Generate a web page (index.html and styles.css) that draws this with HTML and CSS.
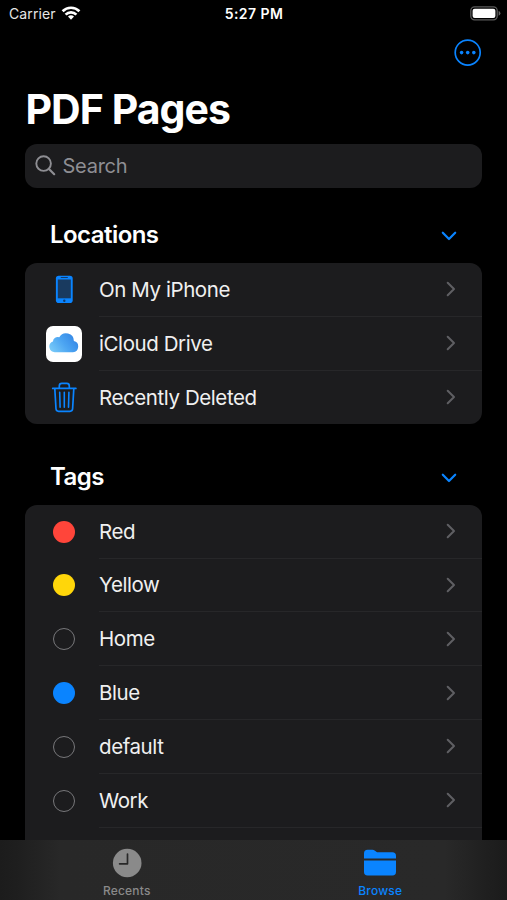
FILE: index.html
```html
<!DOCTYPE html>
<html lang="en">
<head>
    <meta charset="UTF-8">
    <meta name="viewport" content="width=device-width, initial-scale=1.0">
    <title>PDF Pages</title>
    <link rel="stylesheet" href="styles.css">
</head>
<body>
    <svg class="symbols" aria-hidden="true">
        <symbol id="chevron-right" viewBox="0 0 10 16">
            <path d="M1.7 1.7 L8 8 L1.7 14.3" fill="none" stroke="currentColor" stroke-width="2" stroke-linecap="round" stroke-linejoin="round"/>
        </symbol>
        <symbol id="chevron-down" viewBox="0 0 16 10">
            <path d="M1.8 1.7 L8 8 L14.2 1.7" fill="none" stroke="currentColor" stroke-width="2.2" stroke-linecap="round" stroke-linejoin="round"/>
        </symbol>
    </svg>
    <div class="phone">
        <div class="status-bar">
            <div class="carrier">
                <span>Carrier</span>
                <svg width="20" height="15" viewBox="0 0 20 15">
                    <g fill="none" stroke="#fff" stroke-width="2.7">
                        <path d="M1.6 5.2 A12 12 0 0 1 18.4 5.2"/>
                        <path d="M4.6 8.6 A7.6 7.6 0 0 1 15.4 8.6"/>
                    </g>
                    <path d="M7 10.6 A4.4 4.4 0 0 1 13 10.6 L10 13.7 Z" fill="#fff"/>
                </svg>
            </div>
            <div class="time">5:27 PM</div>
            <div class="battery">
                <svg width="32" height="15" viewBox="0 0 32 15">
                    <rect x="0.8" y="0.9" width="26.4" height="12.9" rx="3.8" fill="none" stroke="#5b5b5b" stroke-width="1.3"/>
                    <rect x="2.6" y="2.7" width="22.8" height="9.3" rx="2.1" fill="#fff"/>
                    <path d="M28.6 5 Q30.4 5.6 30.4 7.3 Q30.4 9 28.6 9.7 Z" fill="#666"/>
                </svg>
            </div>
        </div>
        <header class="nav">
            <button class="more-btn" aria-label="More">
                <svg width="28" height="28" viewBox="0 0 28 28">
                    <circle cx="13.7" cy="13.6" r="12.5" fill="none" stroke="currentColor" stroke-width="1.7"/>
                    <circle cx="7.6" cy="13.6" r="1.8" fill="currentColor"/>
                    <circle cx="13.7" cy="13.6" r="1.8" fill="currentColor"/>
                    <circle cx="19.8" cy="13.6" r="1.8" fill="currentColor"/>
                </svg>
            </button>
        </header>
        <main class="content">
            <h1>PDF Pages</h1>
            <div class="search">
                <svg width="22" height="22" viewBox="0 0 22 22">
                    <circle cx="8.6" cy="8.6" r="7.3" fill="none" stroke="currentColor" stroke-width="1.9"/>
                    <path d="M14 14 L19.2 19.2" stroke="currentColor" stroke-width="2.2" stroke-linecap="round"/>
                </svg>
                <span>Search</span>
            </div>

            <section>
                <div class="section-header">
                    <h2>Locations</h2>
                    <svg class="toggle"><use href="#chevron-down"/></svg>
                </div>
                <ul class="list">
                    <li>
                        <div class="icon">
                            <svg width="18" height="29" viewBox="0 0 18 29">
                                <rect x="0.9" y="0.7" width="16.8" height="27.4" rx="2.8" fill="#0a84ff"/>
                                <rect x="2.8" y="4.5" width="13" height="18.8" fill="#193a5f"/>
                                <path d="M6.2 2.5 H12.4" stroke="#123c6c" stroke-width="1.1" stroke-linecap="round"/>
                                <circle cx="9.3" cy="25.7" r="1.2" fill="#123c6c"/>
                            </svg>
                        </div>
                        <div class="row"><span>On My iPhone</span><svg class="arrow"><use href="#chevron-right"/></svg></div>
                    </li>
                    <li>
                        <div class="icon">
                            <div class="icloud">
                                <svg width="30" height="21" viewBox="0 0 30 21">
                                    <defs>
                                        <linearGradient id="cloud" x1="0" y1="0.8" x2="1" y2="0.3">
                                            <stop offset="0" stop-color="#78caf8"/>
                                            <stop offset="0.5" stop-color="#4ca5f2"/>
                                            <stop offset="1" stop-color="#3385e5"/>
                                        </linearGradient>
                                    </defs>
                                    <path d="M6.3 19.2 A5.6 5.6 0 0 1 3.9 8.4 A4.8 4.8 0 0 1 10.3 4.3 A7.8 7.8 0 0 1 24.9 8 A5.7 5.7 0 0 1 24 19.2 Z" fill="url(#cloud)"/>
                                </svg>
                            </div>
                        </div>
                        <div class="row"><span>iCloud Drive</span><svg class="arrow"><use href="#chevron-right"/></svg></div>
                    </li>
                    <li>
                        <div class="icon">
                            <svg width="26" height="31" viewBox="0 0 26 31" fill="none" stroke="#0a84ff" stroke-width="1.7" stroke-linecap="round" stroke-linejoin="round">
                                <path d="M1.7 6.4 H24.9"/>
                                <path d="M8.3 6.2 V4 Q8.3 1.4 10.8 1.4 H15.8 Q18.3 1.4 18.3 4 V6.2"/>
                                <path d="M3.8 6.8 L5 26.8 Q5.2 29.3 7.6 29.3 H19 Q21.4 29.3 21.6 26.8 L22.8 6.8"/>
                                <path d="M8.7 10.3 L9.1 25.2 M13.3 10.3 V25.2 M17.9 10.3 L17.5 25.2" stroke-width="1.6"/>
                            </svg>
                        </div>
                        <div class="row"><span>Recently Deleted</span><svg class="arrow"><use href="#chevron-right"/></svg></div>
                    </li>
                </ul>
            </section>

            <section>
                <div class="section-header">
                    <h2>Tags</h2>
                    <svg class="toggle"><use href="#chevron-down"/></svg>
                </div>
                <ul class="list">
                    <li>
                        <div class="icon"><span class="dot red"></span></div>
                        <div class="row"><span>Red</span><svg class="arrow"><use href="#chevron-right"/></svg></div>
                    </li>
                    <li>
                        <div class="icon"><span class="dot yellow"></span></div>
                        <div class="row"><span>Yellow</span><svg class="arrow"><use href="#chevron-right"/></svg></div>
                    </li>
                    <li>
                        <div class="icon"><span class="dot"></span></div>
                        <div class="row"><span>Home</span><svg class="arrow"><use href="#chevron-right"/></svg></div>
                    </li>
                    <li>
                        <div class="icon"><span class="dot blue"></span></div>
                        <div class="row"><span>Blue</span><svg class="arrow"><use href="#chevron-right"/></svg></div>
                    </li>
                    <li>
                        <div class="icon"><span class="dot"></span></div>
                        <div class="row"><span>default</span><svg class="arrow"><use href="#chevron-right"/></svg></div>
                    </li>
                    <li>
                        <div class="icon"><span class="dot"></span></div>
                        <div class="row"><span>Work</span><svg class="arrow"><use href="#chevron-right"/></svg></div>
                    </li>
                    <li></li>
                </ul>
            </section>
        </main>
        <nav class="tab-bar">
            <a class="tab">
                <svg width="34" height="30" viewBox="0 0 34 30">
                    <circle cx="17.2" cy="15" r="14.3" fill="currentColor"/>
                    <path d="M17.5 6 V15.8 H9.6" fill="none" stroke="#282828" stroke-width="1.7" stroke-linecap="round" stroke-linejoin="round"/>
                </svg>
                <span>Recents</span>
            </a>
            <a class="tab active">
                <svg width="34" height="30" viewBox="0 0 34 30" fill="currentColor">
                    <path d="M1 10.4 V5.4 Q1 1.7 4.6 1.7 H9.3 Q10.8 1.7 12 2.7 L13.3 3.7 Q14.1 4.3 15.3 4.3 H29.4 Q33 4.3 33 8 V10.4 Z"/>
                    <path d="M1 12.4 H33 V23.8 Q33 27.6 29.4 27.6 H4.6 Q1 27.6 1 23.8 Z"/>
                </svg>
                <span>Browse</span>
            </a>
        </nav>
    </div>
</body>
</html>
```
FILE: styles.css
```css
* {
    box-sizing: border-box;
}
body {
    margin: 0;
    background-color: #000;
    color: #fff;
    font-family: Inter, "Liberation Sans", sans-serif;
}
h1, h2, ul {
    margin: 0;
    padding: 0;
}
svg {
    display: block;
    flex-shrink: 0;
}
.symbols {
    display: none;
}
.phone {
    display: flex;
    flex-direction: column;
    width: 507px;
    height: 900px;
    overflow: hidden;
}
.status-bar {
    display: grid;
    grid-template-columns: 1fr auto 1fr;
    align-items: center;
    height: 27px;
    padding: 0 5px 0 9px;
    font-size: 14px;
    line-height: 27px;
}
.carrier {
    display: flex;
    align-items: center;
    gap: 5px;
    color: #e6e6e6;
    letter-spacing: 0.1px;
}
.time {
    padding-right: 3px;
    font-weight: 600;
    letter-spacing: 0.45px;
}
.battery {
    display: flex;
    justify-content: flex-end;
}
.nav {
    display: flex;
    justify-content: flex-end;
    padding: 12px 25px 0 0;
    height: 55px;
}
.more-btn {
    width: 28px;
    height: 28px;
    padding: 0;
    border: none;
    background: none;
    color: #0a84ff;
}
.content {
    flex: 1;
    min-height: 0;
    padding: 0 25px;
    overflow: hidden;
}
h1 {
    height: 62px;
    padding-left: 0.5px;
    line-height: 54px;
    font-size: 41px;
    font-weight: 700;
    letter-spacing: -0.95px;
}
.search {
    display: flex;
    align-items: center;
    gap: 6px;
    height: 44px;
    padding-left: 9.5px;
    border-radius: 12px;
    background-color: #1c1c1e;
    color: #8e8e93;
    font-size: 20px;
    letter-spacing: -0.25px;
}
.section-header {
    display: flex;
    align-items: center;
    justify-content: space-between;
    height: 75px;
    padding: 18px 25px 0;
}
section + section .section-header {
    height: 80.4px;
    padding-top: 24px;
}
h2 {
    font-size: 24px;
    font-weight: 600;
    letter-spacing: -0.55px;
}
.toggle {
    width: 16px;
    height: 10px;
    margin-top: 3px;
    color: #0a84ff;
}
.list {
    list-style: none;
    border-radius: 12px;
    overflow: hidden;
    background-color: #1c1c1e;
}
.list li {
    display: flex;
    height: 53.8px;
}
.icon {
    display: flex;
    align-items: center;
    justify-content: center;
    width: 78px;
    margin-right: -4px;
}
.row {
    display: flex;
    flex: 1;
    align-items: center;
    justify-content: space-between;
    padding-right: 26px;
    border-bottom: 1px solid #272729;
    font-size: 20.5px;
    letter-spacing: -0.42px;
    color: #f0f0f0;
}
.list li:last-child .row {
    border-bottom: none;
}
.arrow {
    width: 10px;
    height: 16px;
    color: #5f5f63;
}
.icloud {
    display: flex;
    align-items: center;
    justify-content: center;
    width: 36px;
    height: 36px;
    border-radius: 7px;
    background-color: #fff;
}
.dot {
    width: 22px;
    height: 22px;
    border: 1.4px solid #77777a;
    border-radius: 50%;
}
.red {
    border: none;
    background-color: #ff453a;
}
.yellow {
    border: none;
    background-color: #ffd60a;
}
.blue {
    border: none;
    background-color: #0a84ff;
}
.tab-bar {
    display: flex;
    height: 60.5px;
    background: linear-gradient(to right, #1c1c1c 0, #1e1e1e 15px, #282828 60px, #292929 445px, #1e1e1e 492px, #1b1b1b 100%);
}
.tab {
    display: flex;
    flex: 1;
    flex-direction: column;
    align-items: center;
    gap: 5px;
    padding-top: 8.5px;
    font-size: 12px;
    font-weight: 500;
    line-height: 15px;
    letter-spacing: 0.2px;
    color: #8a8a8a;
}
.active {
    color: #0a84ff;
}
```
